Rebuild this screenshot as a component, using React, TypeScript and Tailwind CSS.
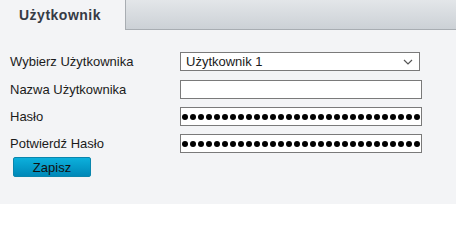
import React from "react";

const fields = [
  { label: "Nazwa Użytkownika", kind: "text" },
  { label: "Hasło", kind: "password" },
  { label: "Potwierdź Hasło", kind: "password" },
];

function Dots() {
  return (
    <div className="flex items-center gap-[2px] pl-[1px]">
      {Array.from({ length: 30 }).map((_, i) => (
        <span key={i} className="block h-[6px] w-[6px] rounded-full bg-black" />
      ))}
    </div>
  );
}

export default function App() {
  return (
    <div className="h-[204px] w-[456px] bg-[#f3f4f6] font-['Liberation_Sans',Arial,sans-serif] text-[13px] text-[#1b1b1b]">
      <div className="flex h-[30px]">
        <div className="flex w-[125px] items-center pl-[19px] pt-[1px] text-[14px] font-bold tracking-[0.5px] text-[#363b45]">
          Użytkownik
        </div>
        <div className="flex-1 border-b border-l border-[#a8adb2] bg-gradient-to-b from-[#e3e6e9] to-[#ccd1d6]" />
      </div>

      <div className="flex flex-col gap-[8px] pl-[10px] pt-[22px]">
        <div className="mb-[1px] flex h-[19px] items-center">
          <span className="w-[170px]">Wybierz Użytkownika</span>
          <div className="flex h-[19px] w-[240px] items-center justify-between border border-[#7a7a7a] bg-white pl-[5px] pr-[6px]">
            <span>Użytkownik 1</span>
            <svg width="10" height="6" viewBox="0 0 10 6" fill="none">
              <path d="M1 1l4 4 4-4" stroke="#555" strokeWidth="1.2" />
            </svg>
          </div>
        </div>
        {fields.map((f) => (
          <div key={f.label} className="flex h-[19px] items-center">
            <span className="w-[170px]">{f.label}</span>
            <div className="flex h-[19px] w-[242px] items-center border border-[#7a7a7a] bg-white">
              {f.kind === "password" && <Dots />}
            </div>
          </div>
        ))}
        <div className="-mt-[4px] pl-[3px]">
          <button className="block h-[20px] w-[78px] rounded-[2px] border border-[#0a86ad] bg-gradient-to-b from-[#0db0dc] to-[#0088b8] text-[13px] text-[#111]">
            Zapisz
          </button>
        </div>
      </div>
    </div>
  );
}
